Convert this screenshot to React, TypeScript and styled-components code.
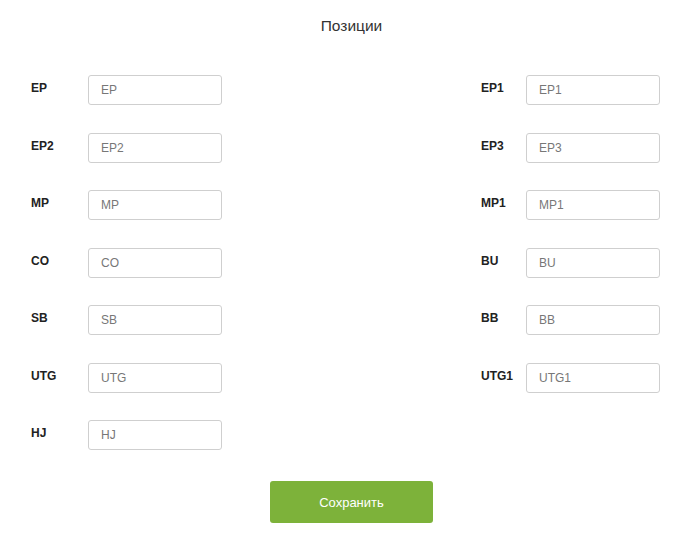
import styled, { createGlobalStyle } from "styled-components";

const GlobalStyle = createGlobalStyle`
  body {
    margin: 0;
    background: #fff;
    font-family: "Liberation Sans", Arial, sans-serif;
  }
`;

const LEFT = ["EP", "EP2", "MP", "CO", "SB", "UTG", "HJ"];
const RIGHT = ["EP1", "EP3", "MP1", "BU", "BB", "UTG1"];

const Field = ({ name, labelWidth }: { name: string; labelWidth: number }) => (
  <FieldRow $labelWidth={labelWidth}>
    <Label>{name}</Label>
    <Input placeholder={name} />
  </FieldRow>
);

export default function App() {
  return (
    <>
      <GlobalStyle />
      <Page>
        <Title>Позиции</Title>
        <Columns>
          <Column>
            {LEFT.map((p) => (
              <Field key={p} name={p} labelWidth={57} />
            ))}
          </Column>
          <Column>
            {RIGHT.map((p) => (
              <Field key={p} name={p} labelWidth={45} />
            ))}
          </Column>
        </Columns>
        <SaveButton>Сохранить</SaveButton>
      </Page>
    </>
  );
}

const Page = styled.div`
  width: 700px;
  box-sizing: border-box;
  padding: 17px 40px 0 31px;
  display: flex;
  flex-direction: column;
  align-items: center;
`;

const Title = styled.h1`
  margin: 0 0 0 12px;
  font-size: 15.5px;
  line-height: 18px;
  font-weight: normal;
  color: #333;
`;

const Columns = styled.div`
  align-self: stretch;
  margin-top: 40px;
  display: flex;
  justify-content: space-between;
`;

const Column = styled.div`
  display: flex;
  flex-direction: column;
  gap: 27.5px;
`;

const FieldRow = styled.div<{ $labelWidth: number }>`
  display: grid;
  grid-template-columns: ${(p) => p.$labelWidth}px 134px;
  align-items: center;
`;

const Label = styled.label`
  font-size: 12px;
  font-weight: bold;
  color: #222;
  margin-top: -4px;
`;

const Input = styled.input`
  box-sizing: border-box;
  height: 30px;
  width: 134px;
  padding: 0 12px;
  border: 1px solid #cfcfcf;
  border-radius: 3px;
  font-family: inherit;
  font-size: 12px;
  color: #333;
  outline: none;

  &::placeholder {
    color: #777;
  }
`;

const SaveButton = styled.button`
  margin: 31px 0 0 12px;
  width: 163px;
  height: 42px;
  border: none;
  border-radius: 3px;
  background: #7db23a;
  color: #fff;
  font-family: inherit;
  font-size: 13px;
  cursor: pointer;
`;
